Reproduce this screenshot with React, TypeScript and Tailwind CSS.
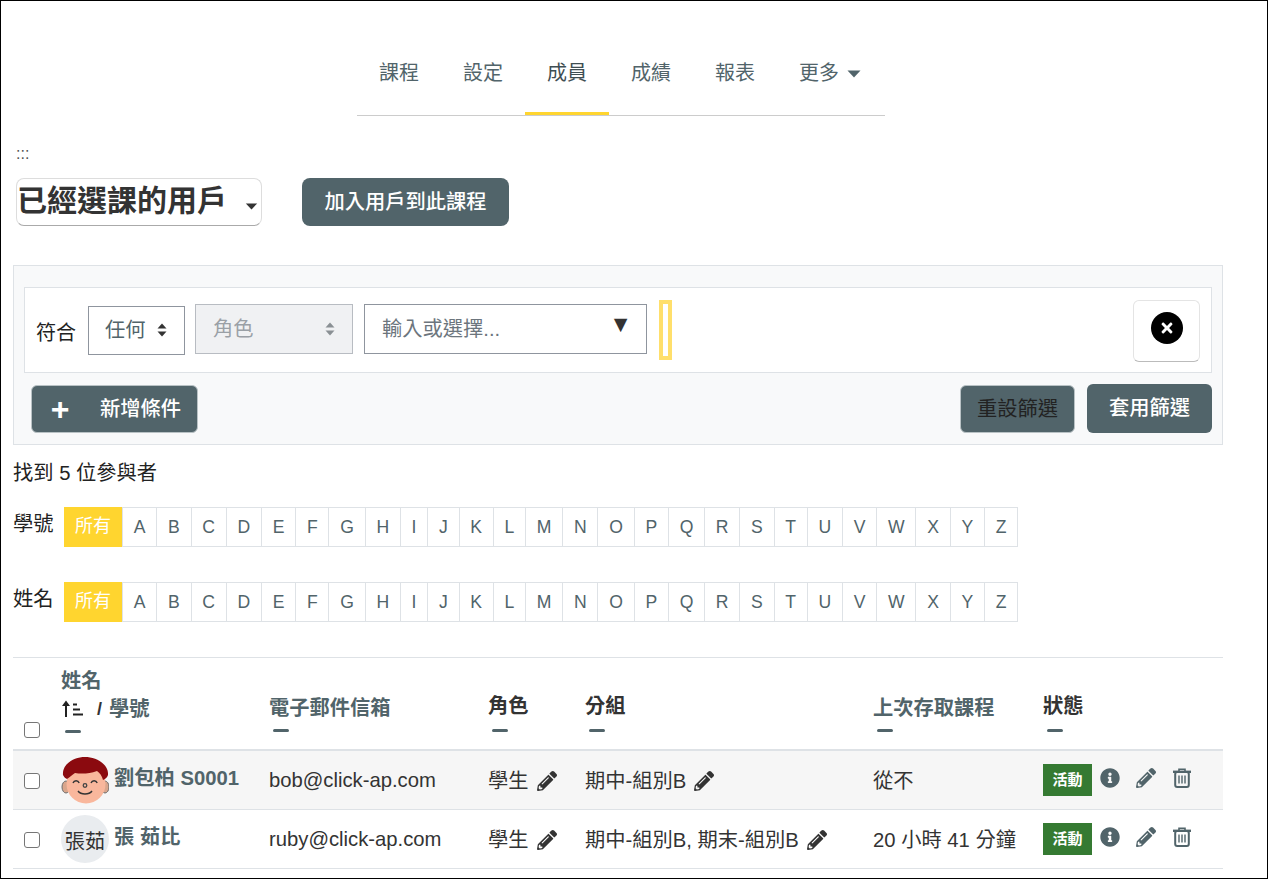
import { FaInfoCircle, FaPencilAlt, FaTimes } from 'react-icons/fa';

const FONT = 'font-["Liberation_Sans","Noto_Sans_CJK_TC",sans-serif]';
const LETTERS = 'ABCDEFGHIJKLMNOPQRSTUVWXYZ'.split('');
const TABS = ['課程', '設定', '成員', '成績', '報表'];

function UpDown({ className }: { className: string }) {
  return (
    <svg viewBox="0 0 10 14" className={className} fill="currentColor">
      <path d="M5 0.5 9.5 5.5H0.5Z" />
      <path d="M5 13.5 0.5 8.5H9.5Z" />
    </svg>
  );
}

function SortIcon() {
  return (
    <svg viewBox="0 0 22 18" className="w-[22px] h-[18px] ml-px text-[#222]" fill="none" stroke="currentColor">
      <path d="M4 17V3" strokeWidth="2" />
      <path d="M4 0.5 8 6H0Z" fill="currentColor" stroke="none" />
      <path d="M11 4.5h4M11 9.5h7M11 14.5h10" strokeWidth="1.8" />
    </svg>
  );
}

function Trash() {
  return (
    <svg viewBox="0 0 18 20" className="w-[18px] h-5 mt-1 ml-[17px]" fill="none" stroke="currentColor">
      <path d="M6 3V1.2h6V3" strokeWidth="1.6" />
      <path d="M0 3.8h18" strokeWidth="2.4" />
      <rect x="2.2" y="4" width="13.6" height="15" rx="2" strokeWidth="2" />
      <path d="M6 7.5v8M9 7.5v8M12 7.5v8" strokeWidth="1.4" />
    </svg>
  );
}

function Face() {
  return (
    <svg viewBox="0 0 48 48" className="w-12 h-12 shrink-0">
      <ellipse cx="5" cy="31" rx="4" ry="6" fill="#d9a68c" stroke="#6b6b6b" strokeWidth="1" />
      <ellipse cx="44" cy="31" rx="4" ry="6" fill="#d9a68c" stroke="#6b6b6b" strokeWidth="1" />
      <circle cx="25" cy="28" r="19.5" fill="#f9b79c" />
      <path d="M2 19C1 8 13 1 24 1c11 0 24 7 23 18-1 3-3 4-5 5-1-4-3-7-6-9-8 3-16 3-22 2-3 2-5 4-8 6-2-1-3-2-4-4Z" fill="#8b0a0f" />
      <path d="M12 27c1.2-3 5-3 6.2 0M30 27c1.2-3 5-3 6.2 0" fill="none" stroke="#333" strokeWidth="1.4" />
      <circle cx="24" cy="29.5" r="1.8" fill="none" stroke="#444" strokeWidth="1.3" />
      <path d="M17 35c3 4 11 4 14 0" fill="none" stroke="#333" strokeWidth="1.5" />
    </svg>
  );
}

function LetterBar({ label, mt }: { label: string; mt: string }) {
  return (
    <div className={`flex ${mt}`}>
      <span className="w-[51px] text-[20.25px] leading-[34px] text-[#222]">{label}</span>
      <div className="flex h-10 text-[17.6px] leading-[39px] text-[#51646a] border-y border-[#dee2e6]">
        <span className="w-[58px] -my-px h-10 bg-[#ffd52f] text-white text-center text-[18px]">所有</span>
        {LETTERS.map((l) => (
          <span key={l} className="px-[10.75px] border-l border-[#dee2e6] last:border-r">
            {l}
          </span>
        ))}
      </div>
    </div>
  );
}

function HeadCell({ w, dark, label, up }: { w: string; dark?: boolean; label: string; up?: boolean }) {
  return (
    <div className={`${w} flex flex-col justify-end pb-[17px]`}>
      <span className={`leading-[30px] font-bold ${dark ? 'text-[#333]' : 'text-[#51646a]'} ${up ? 'mb-[8px]' : 'mb-[6px]'}`}>
        {label}
      </span>
      <span className="ml-1 w-4 h-[3px] rounded-sm bg-[#51646a]" />
    </div>
  );
}

function Row({
  avatar,
  name,
  email,
  group,
  last,
  stripe,
}: {
  avatar: React.ReactNode;
  name: string;
  email: string;
  group: string;
  last: string;
  stripe?: boolean;
}) {
  return (
    <div className={`flex h-[59px] border-b border-[#dee2e6] leading-[30px] ${stripe ? 'bg-[#f6f6f6]' : ''}`}>
      <div className="w-[48px] pl-[11px] pt-[22px]">
        <span className="block w-4 h-4 rounded-[3px] border border-[#767676] bg-white" />
      </div>
      <div className="w-[208px] flex gap-[5px] pt-[5px]">
        {avatar}
        <span className="mt-[7px] font-bold text-[#51646a] whitespace-nowrap">{name}</span>
      </div>
      <div className="w-[219px] pt-[14px] text-[#333]">{email}</div>
      <div className="w-[97px] pt-[15px] flex items-start gap-[8px] text-[#333]">
        學生
        <FaPencilAlt className="w-5 h-5 mt-[5px] text-[#333]" />
      </div>
      <div className="w-[288px] pt-[15px] flex items-start gap-[8px] text-[#333]">
        {group}
        <FaPencilAlt className="w-5 h-5 mt-[5px] text-[#333]" />
      </div>
      <div className="w-[170px] pt-[15px] text-[#333] whitespace-nowrap">{last}</div>
      <div className="w-[180px] pt-[13px] flex items-start text-[#51646a]">
        <span className="w-[49px] h-8 bg-[#357a32] text-white text-[15px] leading-8 font-bold text-center">活動</span>
        <FaInfoCircle className="w-5 h-5 mt-1 ml-2" />
        <FaPencilAlt className="w-5 h-5 mt-1 ml-4" />
        <Trash />
      </div>
    </div>
  );
}

export default function App() {
  return (
    <div className={`${FONT} w-[1268px] h-[879px] border border-black overflow-hidden bg-white pl-3 text-[20.25px]`}>
      <div className="ml-[344px] mt-[57px] w-[528px] flex border-b border-[#ccc] text-[20px] leading-[30px] text-[#51646a]">
        {TABS.map((t, i) => (
          <span
            key={t}
            className={`px-[22px] h-[57px] ${i === 2 ? 'border-b-[3px] border-[#ffd52f] -mb-px text-[#3f4e53]' : ''}`}
          >
            {t}
          </span>
        ))}
        <span className="pl-[22px] flex items-start">
          更多
          <svg viewBox="0 0 14 8" className="w-[14px] h-2 ml-[8px] mt-[12px]" fill="#51646a">
            <path d="M0.5 0.5H13.5L7 7.5Z" />
          </svg>
        </span>
      </div>

      <div className="mt-[28px] ml-[3px] text-[16px] leading-5 text-[#555]">:::</div>

      <div className="mt-[14px] flex">
        <div className="ml-[3px] w-[246px] h-12 rounded-lg border border-[#ddd] border-b-[#aaa] flex items-center">
          <span className="text-[30px] leading-[46px] font-bold text-[#333] -mt-0.5">已經選課的用戶</span>
          <svg viewBox="0 0 14 8" className="w-[13px] h-[7px] ml-[18px] mt-[8px]" fill="#333">
            <path d="M0.5 0.5H13.5L7 7.5Z" />
          </svg>
        </div>
        <button className="ml-[40px] w-[207px] h-12 rounded-lg bg-[#51646a] text-white font-medium">
          加入用戶到此課程
        </button>
      </div>

      <div className="mt-[39px] w-[1210px] h-[180px] border border-[#dee2e6] bg-[#f8f9fa] pt-[21px] px-[10px]">
        <div className="h-[86px] border border-[#dee2e6] bg-white flex items-center pl-[11px]">
          <span className="w-10 text-[20px] text-[#222] mt-[5px]">符合</span>
          <div className="ml-3 w-[97px] h-[49px] border border-[#8f959e] flex items-center pl-4 text-[#51646a]">
            任何
            <UpDown className="w-[10px] h-[14px] ml-[11px] text-[#333]" />
          </div>
          <div className="ml-[10px] w-[158px] h-[50px] -mt-[2px] border border-[#b8bcc2] bg-[#f0f1f3] flex items-center pl-[17px] text-[#9aa0a6]">
            角色
            <UpDown className="w-[10px] h-[14px] ml-[71px] text-[#8a9094]" />
          </div>
          <div className="ml-[11px] w-[283px] h-[50px] -mt-[2px] border border-[#8f959e] flex items-start pl-[17px] leading-[48px] text-[#6c757d]">
            輸入或選擇...
            <span className="ml-[109px] mt-[6px] text-[23px] leading-[26px] text-[#333]">▼</span>
          </div>
          <span className="ml-3 w-[13px] h-[60px] border-4 border-[#ffdf6b]" />
          <div className="ml-auto mr-[11px] mt-[2px] w-[67px] h-[62px] rounded-md border border-[#e4e4e4] border-b-[#bbb] flex items-center justify-center pb-[7px]">
            <span className="w-8 h-8 rounded-full bg-black flex items-center justify-center">
              <FaTimes className="w-4 h-4 text-white" />
            </span>
          </div>
        </div>
        <div className="mt-[12px] flex pl-[7px]">
          <button className="w-[167px] h-12 rounded-md border border-[#b9c2c5] bg-[#51646a] text-white flex items-center font-medium">
            <span className="ml-[18px] w-5 text-[32px] leading-[30px] font-bold">+</span>
            <span className="ml-[30px]">新增條件</span>
          </button>
          <button className="ml-auto w-[115px] h-12 rounded-md border border-[#b9c2c5] bg-[#51646a] text-[#222]">
            重設篩選
          </button>
          <button className="ml-3 w-[125px] h-[49px] -mt-px rounded-md bg-[#51646a] text-white font-medium">
            套用篩選
          </button>
        </div>
      </div>

      <div className="mt-[13px] leading-[30px] text-[#222]">找到 5 位參與者</div>

      <LetterBar label="學號" mt="mt-[19px]" />
      <LetterBar label="姓名" mt="mt-[35px]" />

      <div className="mt-[35px] w-[1210px]">
        <div className="flex h-[94px] border-t border-b-2 border-[#dee2e6]">
          <div className="w-[48px] pl-[11px] pt-[64px]">
            <span className="block w-4 h-4 rounded-[3px] border border-[#767676] bg-white" />
          </div>
          <div className="w-[208px] flex flex-col pt-[8px]">
            <span className="leading-[30px] font-bold text-[#51646a]">姓名</span>
            <span className="flex items-center mt-[-2px] h-[30px] font-bold text-[#51646a]">
              <SortIcon />
              <span className="ml-[13px] mr-[7px] text-[#333] text-[18px]">/</span>
              學號
            </span>
            <span className="mt-[6px] ml-1 w-4 h-[3px] rounded-sm bg-[#51646a]" />
          </div>
          <HeadCell w="w-[219px]" label="電子郵件信箱" />
          <HeadCell w="w-[97px]" dark up label="角色" />
          <HeadCell w="w-[288px]" dark up label="分組" />
          <HeadCell w="w-[170px]" label="上次存取課程" />
          <HeadCell w="w-[180px]" dark up label="狀態" />
        </div>
        <Row
          stripe
          avatar={<Face />}
          name="劉包柏 S0001"
          email="bob@click-ap.com"
          group="期中-組別B"
          last="從不"
        />
        <Row
          avatar={
            <span className="w-12 h-12 shrink-0 rounded-full bg-[#e9ecef] flex items-center justify-center pt-[5px] text-[#333] whitespace-nowrap">
              張茹
            </span>
          }
          name="張 茹比"
          email="ruby@click-ap.com"
          group="期中-組別B, 期末-組別B"
          last="20 小時 41 分鐘"
        />
      </div>
    </div>
  );
}
